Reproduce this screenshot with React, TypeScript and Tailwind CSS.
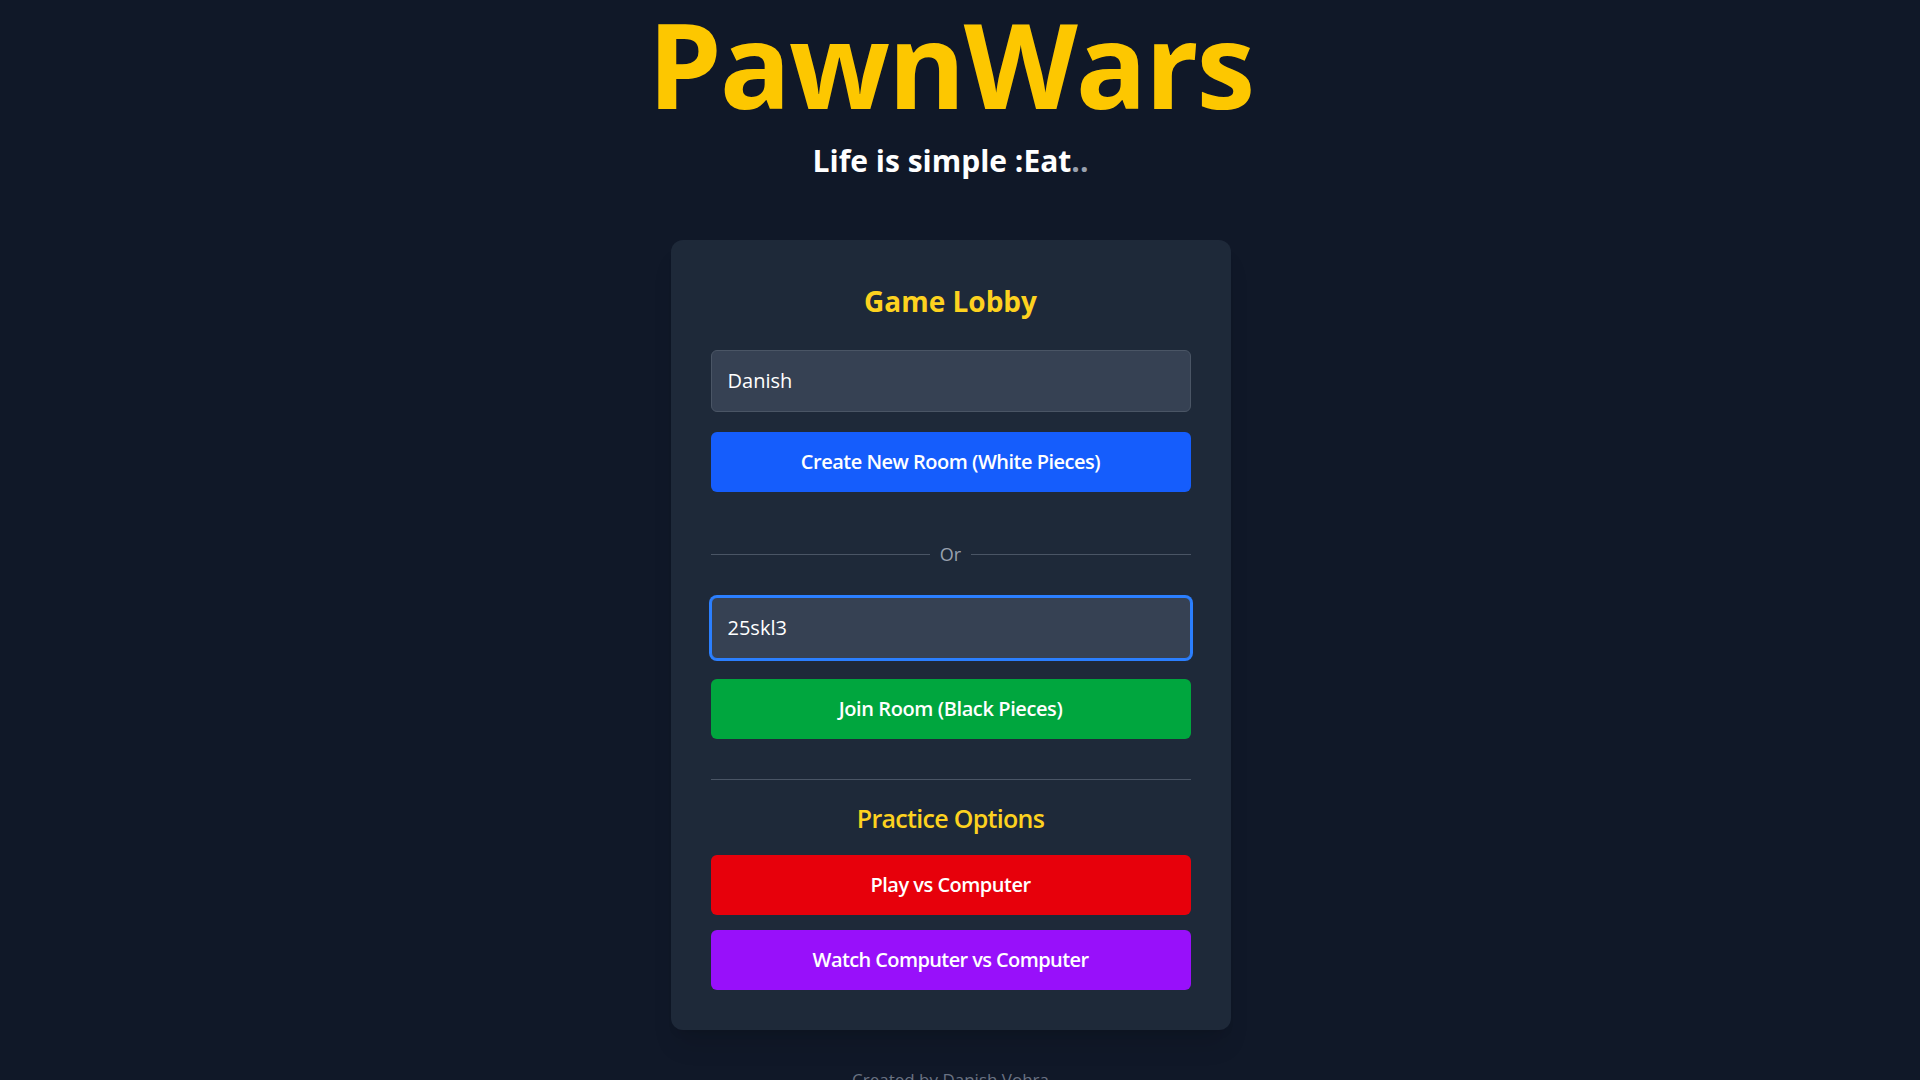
import { useState } from 'react';

export default function App() {
  const [name, setName] = useState('Danish');
  const [roomId, setRoomId] = useState('25skl3');

  return (
    <div className="min-h-screen bg-gray-900 font-['Open_Sans',sans-serif] pr-[19px]">
      <div className="flex flex-col items-center pb-6">
        <h1 className="text-[118px] leading-[127px] font-bold text-yellow-400 tracking-[-2px]">
          PawnWars
        </h1>
        <p className="mt-4 text-[30px] leading-9 font-bold text-white">
          Life is simple :Eat<span className="text-gray-400">..</span>
        </p>

        <div className="mt-[61px] w-[560px] bg-gray-800 rounded-xl shadow-xl px-10 pt-10 pb-10">
          <h2 className="text-[28px] leading-[42px] font-bold text-[#fdd21f] text-center">
            Game Lobby
          </h2>

          <input
            type="text"
            value={name}
            onChange={(e) => setName(e.target.value)}
            placeholder="Enter your name"
            className="mt-7 w-full p-4 text-xl leading-7 text-white bg-gray-700 border border-gray-600 rounded-md outline-none"
          />
          <button className="mt-5 w-full py-4 text-xl leading-7 font-semibold tracking-[-0.5px] text-white bg-blue-600 hover:bg-blue-700 rounded-md">
            Create New Room (White Pieces)
          </button>

          <div className="mt-12 flex items-center">
            <div className="flex-grow border-t border-gray-600"></div>
            <span className="mx-2.5 text-lg leading-7 text-gray-400">Or</span>
            <div className="flex-grow border-t border-gray-600"></div>
          </div>

          <input
            type="text"
            autoFocus
            value={roomId}
            onChange={(e) => setRoomId(e.target.value)}
            placeholder="Enter Room ID"
            className="mt-[29px] w-full p-4 text-xl leading-7 text-white bg-gray-700 border border-blue-500 ring-2 ring-blue-500 rounded-md outline-none"
          />
          <button className="mt-5 w-full py-4 text-xl leading-7 font-semibold tracking-[-0.4px] text-white bg-green-600 hover:bg-green-700 rounded-md">
            Join Room (Black Pieces)
          </button>

          <div className="mt-10 border-t border-gray-600">
            <h3 className="mt-[22px] text-[25px] leading-8 font-semibold tracking-[-0.7px] text-[#fdd21f] text-center">
              Practice Options
            </h3>
            <button className="mt-[21px] w-full py-4 text-xl leading-7 font-semibold tracking-[-0.5px] text-white bg-red-600 hover:bg-red-700 rounded-md">
              Play vs Computer
            </button>
            <button className="mt-[15px] w-full py-4 text-xl leading-7 font-semibold tracking-[-0.6px] text-white bg-purple-600 hover:bg-purple-700 rounded-md">
              Watch Computer vs Computer
            </button>
          </div>
        </div>

        <footer className="mt-[38px] text-[17px] leading-6 text-gray-500">
          Created by Danish Vohra
        </footer>
      </div>
    </div>
  );
}
